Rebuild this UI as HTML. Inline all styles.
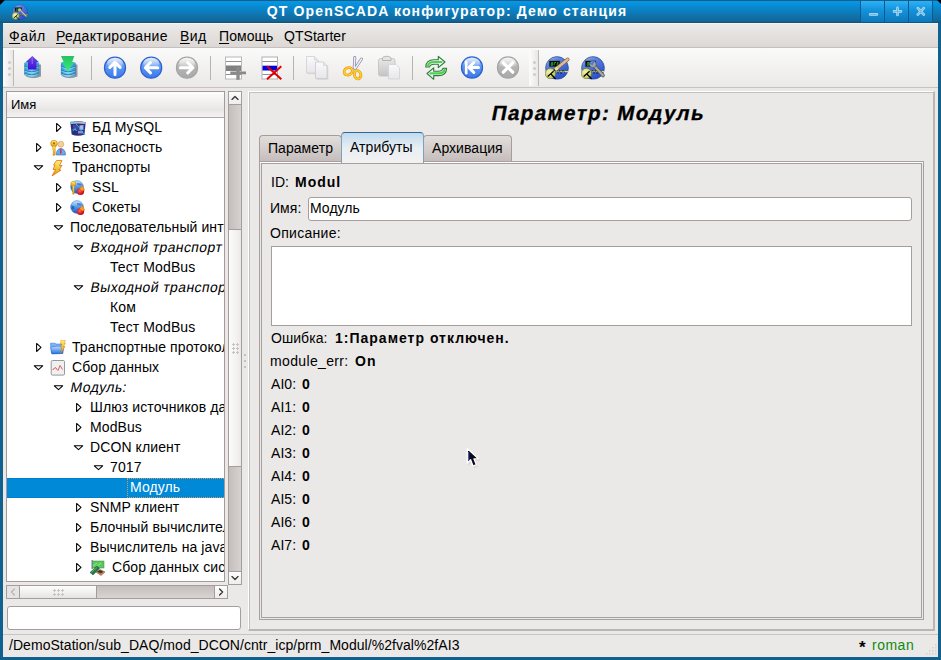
<!DOCTYPE html>
<html><head><meta charset="utf-8">
<style>
*{box-sizing:border-box}
body{margin:0;width:941px;height:660px;overflow:hidden;position:relative;background:#11618f;font-family:"Liberation Sans",sans-serif;font-size:14px;color:#000;letter-spacing:0.05px}
.a{position:absolute;white-space:nowrap}
svg{position:absolute;overflow:visible}
#tb{left:0;top:0;width:941px;height:23px;background:linear-gradient(#1b5c80 0,#1b5c80 1px,#0399ea 1px,#0a86cc 8px,#136696 21px,#0c5784 22px,#0c5784 23px)}
#title{left:0;top:3px;width:894px;text-align:center;color:#fff;font-weight:bold;font-size:14px;letter-spacing:1.15px;line-height:16px}
.wbtn{top:1px;height:21px;background:linear-gradient(#2cb2fa,#1594dc 40%,#0c78bc);border-left:1px solid #0c5a8a}
#client{left:3px;top:23px;width:935px;height:634px;background:#ebe9e7}
#menubar{left:3px;top:23px;width:935px;height:25px;background:linear-gradient(#f5f1ef 0,#f5f1ef 1px,#ebe9e7 1px,#dcd8d6 100%);border-bottom:1px solid #c6bfbd}
.menu{top:28px;line-height:16px}
.menu u{text-decoration:underline;text-decoration-thickness:1px;text-underline-offset:2px}
#toolbar{left:3px;top:48px;width:935px;height:40px;background:linear-gradient(#fafafa,#ebe9e7);border-bottom:1px solid #c9c2c0}
.sep{top:56px;width:1px;height:24px;background:#b8b2b0}
.handle{top:50px;width:11px;height:36px;border-right:1px solid #bdb6b4;background:linear-gradient(90deg,#fcfcfc,#e9e7e6)}
.dot{width:3px;height:3px;border-radius:1.5px;background:#d0cbc9}
#status{left:9px;top:637px;line-height:16px}
/* tree */
#tree{left:6px;top:91px;width:219px;height:491px;background:#fff;border:1px solid #a49a98;overflow:hidden}
#thead{left:0;top:0;width:217px;height:26px;background:linear-gradient(#fdfdfd,#e8e6e5 72%,#f3f1f1 96%);border-bottom:1px solid #b0a8a6}
.row{position:absolute;left:0;width:217px;height:20px;line-height:20px;letter-spacing:0.1px}
.row span{position:absolute;top:-1px}
.sel{background:linear-gradient(#0080d0 0,#0080d0 1px,#0089d7 1px,#0089d7 19px,#0080d0 19px);color:#fff}
.it{transform:skewX(-11deg);transform-origin:0 14px;letter-spacing:0.4px}
.bd{font-weight:bold;letter-spacing:1px}
.lbl{line-height:16px}

#rp{left:248px;top:91px;width:687px;height:540px;border-left:1px solid #fff;border-top:1px solid #fff;border-right:2px solid #bab6b4;border-bottom:2px solid #bab6b4}
#rpi{left:249px;top:92px;width:684px;height:537px;border-left:1px solid #c6bfbd;border-top:1px solid #c6bfbd}
#hdr{left:491px;top:101px;font-size:20.5px;font-weight:bold;letter-spacing:1.4px;line-height:23px;transform:skewX(-11deg);transform-origin:0 18px;-webkit-text-stroke:0.3px #000}
.tab{height:27px;border:1px solid #a59d9b;border-bottom:none;border-radius:4px 4px 0 0;background:linear-gradient(#e2dedc,#c4bcba);line-height:16px}
.tab span{position:absolute;top:4px}
#tabA{background:linear-gradient(#c2daee,#e8eef3 50%,#f3f1f1);border-color:#7da0bc;border-top-color:#2d6896}
#pane{left:259px;top:161px;width:665px;height:459px;border:1px solid #a8a09e}
#panei{left:261px;top:163px;width:661px;height:455px;border:1px solid #a8a09e}
.inp{background:#fff;border:1px solid #a69e9c}

.sb{background:linear-gradient(90deg,#c4bebc,#d6d2d0);border:1px solid #a59d9b}
.sbtn{background:linear-gradient(#fdfdfd,#efedec);border:1px solid #a59d9b}
.grip{width:2px;height:2px;background:#c8c2c0}
</style></head>
<body>
<!--TREEICONDEFS-->
<svg width="0" height="0" style="position:absolute">
<defs>
<linearGradient id="gBlueGlobe" x1="0" y1="0" x2="0" y2="1"><stop offset="0" stop-color="#d8ecff"/><stop offset="0.45" stop-color="#5aa0e8"/><stop offset="1" stop-color="#1a5cc0"/></linearGradient>
<radialGradient id="gRed" cx="0.4" cy="0.4" r="0.6"><stop offset="0" stop-color="#ff6060"/><stop offset="1" stop-color="#c00010"/></radialGradient>
<linearGradient id="gYel" x1="0" y1="0" x2="0" y2="1"><stop offset="0" stop-color="#fff27a"/><stop offset="1" stop-color="#e89a00"/></linearGradient>
<linearGradient id="gFold" x1="0" y1="0" x2="0" y2="1"><stop offset="0" stop-color="#bfdcff"/><stop offset="1" stop-color="#1f6fe0"/></linearGradient>
<linearGradient id="gDb" x1="0" y1="0" x2="1" y2="0"><stop offset="0" stop-color="#2b2f6e"/><stop offset="0.5" stop-color="#7c88d8"/><stop offset="1" stop-color="#2a2d66"/></linearGradient>
<symbol id="i-db" viewBox="0 0 16 16">
 <path d="M0.3 2.2 Q8 0.5 15.7 2.2 L14.5 14.5 Q8 17 1.7 14.5 Z" fill="#2c2e78"/>
 <path d="M0.5 2.2 Q8 0.8 15.5 2.2 L15.3 4 Q8 2.8 0.7 4 Z" fill="#b4bccc"/>
 <path d="M3 5 L8 5 L8 9 L3 9 Z" fill="#4a4cb0" opacity="0.8"/>
 <path d="M9.5 5.5 L13.5 5 L13.3 10 L9.5 10 Z" fill="#c8d0ff" opacity="0.85"/>
 <path d="M8 11 L13 11 L12.8 13.5 L8 13.5 Z" fill="#9aa8f0" opacity="0.8"/>
 <path d="M1.5 9.5 Q8 10.5 15 9.5" stroke="#6a70c8" stroke-width="0.6" fill="none"/>
 <path d="M0.8 1.5 Q6 2.5 8.5 6.5 Q11 11 15 15" stroke="#30c8f0" stroke-width="0.9" fill="none"/>
 <path d="M3 11 L5 8.5 L6.5 11" stroke="#30c8f0" stroke-width="0.9" fill="none"/>
</symbol>
<symbol id="i-sec" viewBox="0 0 16 16">
 <circle cx="4" cy="3.5" r="3.3" fill="url(#gYel)" stroke="#c07800" stroke-width="0.6"/>
 <circle cx="4" cy="3.2" r="1" fill="#a06000"/>
 <path d="M2.8 6 L5.2 6 L5.2 15 L3.5 15.5 L2.8 14 L3.6 13 L2.8 12 L3.6 11 L2.8 10 Z" fill="url(#gYel)" stroke="#c07800" stroke-width="0.5"/>
 <circle cx="10.8" cy="4.2" r="3" fill="#f4cf9a" stroke="#c89050" stroke-width="0.5"/>
 <path d="M6.5 15 Q6 9 10.8 8.5 Q15.5 9 15.5 15 Z" fill="#6ea8ef" stroke="#2a64b8" stroke-width="0.6"/>
 <path d="M10.3 8.6 L11.3 8.6 L11.5 13 L10.8 14 L10.1 13 Z" fill="#e02020"/>
</symbol>
<symbol id="i-bolt" viewBox="0 0 16 16">
 <path d="M6.5 0.5 L12 0.5 L9.5 5.5 L12 5.5 L9 10 L11 10 L2 16 L5.5 9.5 L3 9.5 L5 5 L3.5 5 Z" fill="url(#gYel)" stroke="#e06000" stroke-width="0.7" stroke-linejoin="round"/>
</symbol>
<symbol id="i-sock" viewBox="0 0 16 16">
 <circle cx="7" cy="7" r="6.3" fill="url(#gBlueGlobe)" stroke="#2a70d0" stroke-width="0.6"/>
 <path d="M1.5 6 Q4 5 4.5 8 Q3.5 10 1.5 9" fill="#1a50a0" opacity="0.7"/>
 <path d="M7 3 Q11 2.5 12.5 5 Q9 6 7 4.5 Z" fill="#1a60c0" opacity="0.6"/>
 <circle cx="10.5" cy="11.5" r="3.6" fill="url(#gRed)"/>
 <path d="M9.5 9 Q11 6 13 5.5 Q12 7.5 14 8 Q13.5 9.5 15 10 Q13 10.5 12.5 11 Z" fill="#f8a020" stroke="#e06000" stroke-width="0.4"/>
</symbol>
<symbol id="i-ssl" viewBox="0 0 16 16">
 <use href="#i-sock"/>
 <circle cx="3.3" cy="3.8" r="2.5" fill="url(#gYel)" stroke="#c07800" stroke-width="0.5"/>
 <path d="M2.4 5.5 L4.2 5.5 L4.2 14 L3 14.5 L2.4 13 L3 12 L2.4 11 Z" fill="url(#gYel)" stroke="#c07800" stroke-width="0.4"/>
</symbol>
<symbol id="i-fold" viewBox="0 0 16 16">
 <path d="M0.5 4 L0.5 3.2 L5 3.2 L6 4 L13 4 L13 13.5 L1.5 13.5 Z" fill="#7ab4f4" stroke="#2a70d0" stroke-width="0.5"/>
 <path d="M0.5 7 Q7 5.5 14 6.5 L12.5 13.5 L2 14 Z" fill="url(#gFold)" stroke="#1a5cc0" stroke-width="0.5"/>
 <path d="M11 0 L15.5 0 L14 3 L15.5 3 L13.5 6.5 L15 6.5 L10.5 13.5 L12 7.5 L10.8 7.5 L12 4 L10.5 4 Z" fill="url(#gYel)" stroke="#e07000" stroke-width="0.4"/>
</symbol>
<symbol id="i-chart" viewBox="0 0 16 16">
 <rect x="1.2" y="0.5" width="13.3" height="14.6" rx="1.2" fill="#f0f0f0" stroke="#8c8c8c" stroke-width="0.9"/>
 <path d="M2.5 9.5 L4 9 L5 7.5 L6 8 L7 9.5 L8 10.5 L9 8 L10 5.5 L11 7 L12.5 9.5" fill="none" stroke="#e05050" stroke-width="0.9"/>
</symbol>
<symbol id="i-net" viewBox="0 0 16 16">
 <rect x="1.5" y="0" width="1.2" height="9" fill="#7070c8"/>
 <rect x="2.5" y="1" width="11.5" height="7" fill="#5ac85a" stroke="#3a8a3a" stroke-width="0.5"/>
 <path d="M3 6 L7 3 M6 7 L11 3" stroke="#a0f0a0" stroke-width="0.8"/>
 <path d="M0 12.5 L7 6 L9.5 8.5 L3 15 Z" fill="#1a7a4a" stroke="#0a4a2a" stroke-width="0.4"/>
 <path d="M1.5 12.5 L7 7.5" stroke="#d8c040" stroke-width="0.6"/>
 <path d="M6 12 L10 9.5 L15 12 L11 15.5 Z" fill="#d88a4a" stroke="#7a3a2a" stroke-width="0.5"/>
 <path d="M7 11.8 L10 10 L13.5 11.8 L10.8 13.5 Z" fill="#3a3a3a"/>
</symbol>
</defs></svg>

<!--/TREEICONDEFS-->
<div class="a" id="tb"></div>
<div class="a" id="title">QT OpenSCADA конфигуратор: Демо станция</div>
<div class="a wbtn" style="left:860px;width:24px"></div>
<div class="a wbtn" style="left:884px;width:24px"></div>
<div class="a wbtn" style="left:908px;width:25px;border-right:1px solid #0c5a8a"></div>
<svg style="left:0;top:0" width="941" height="23">
<path d="M0 0 L5 0 L0 5 Z" fill="#000"/>
<path d="M937 0 L941 0 L941 4 Z" fill="#000"/>
<path d="M870.3 14.4 L876.8 14.4" stroke="#b8e0f6" stroke-width="2.8" stroke-linecap="round"/>
<path d="M870.3 14.4 L876.8 14.4" stroke="#6cb8e4" stroke-width="1.2" stroke-linecap="round"/>
<path d="M894 11.4 L901 11.4 M897.5 7.9 L897.5 14.9" stroke="#b8e0f6" stroke-width="2.6" stroke-linecap="round"/>
<path d="M894 11.4 L901 11.4 M897.5 7.9 L897.5 14.9" stroke="#6cb8e4" stroke-width="1.1" stroke-linecap="round"/>
<path d="M917.8 8.2 L923.8 14.6 M923.8 8.2 L917.8 14.6" stroke="#b8e0f6" stroke-width="2.6" stroke-linecap="round"/>
<path d="M917.8 8.2 L923.8 14.6 M923.8 8.2 L917.8 14.6" stroke="#6cb8e4" stroke-width="1.1" stroke-linecap="round"/>
</svg>
<div class="a" id="client"></div>
<div class="a" id="menubar"></div>
<div class="a menu" style="left:9px;letter-spacing:0.6px"><u>Ф</u>айл</div>
<div class="a menu" style="left:56px;letter-spacing:0.38px"><u>Р</u>едактирование</div>
<div class="a menu" style="left:180px;letter-spacing:0.4px"><u>В</u>ид</div>
<div class="a menu" style="left:219px"><u>П</u>омощь</div>
<div class="a menu" style="left:284px">QTStarter</div>
<div class="a" id="toolbar"></div>
<div class="a handle" style="left:3px"></div>
<div class="a dot" style="left:7.5px;top:60.5px"></div>
<div class="a dot" style="left:7.5px;top:66.5px"></div>
<div class="a dot" style="left:7.5px;top:72.5px"></div>
<div class="a sep" style="left:91px"></div>
<div class="a sep" style="left:210px"></div>
<div class="a sep" style="left:293px"></div>
<div class="a sep" style="left:412px"></div>
<div class="a handle" style="left:529px;width:10px"></div>
<div class="a dot" style="left:532.5px;top:60.5px"></div>
<div class="a dot" style="left:532.5px;top:66.5px"></div>
<div class="a dot" style="left:532.5px;top:72.5px"></div>
<!--TOOLICONS-->
<svg style="left:0;top:0" width="941" height="90">
<defs>
<linearGradient id="tgBlue" x1="0" y1="0" x2="0" y2="1"><stop offset="0" stop-color="#9cc0f8"/><stop offset="0.5" stop-color="#5a94f0"/><stop offset="1" stop-color="#3a78ec"/></linearGradient>
<linearGradient id="tgHi" x1="0" y1="0" x2="0" y2="1"><stop offset="0" stop-color="#fff" stop-opacity="0.75"/><stop offset="1" stop-color="#fff" stop-opacity="0.05"/></linearGradient>
<linearGradient id="tgGray" x1="0" y1="0" x2="0" y2="1"><stop offset="0" stop-color="#e0e0e0"/><stop offset="0.5" stop-color="#b4b4b4"/><stop offset="1" stop-color="#a8a8a8"/></linearGradient>
<linearGradient id="tgCyl" x1="0" y1="0" x2="1" y2="0"><stop offset="0" stop-color="#2a90c8"/><stop offset="0.5" stop-color="#78d0f4"/><stop offset="1" stop-color="#2a88c0"/></linearGradient>
<linearGradient id="tgPurp" x1="0" y1="0" x2="0" y2="1"><stop offset="0" stop-color="#6a4ae0"/><stop offset="1" stop-color="#4010d8"/></linearGradient>
<linearGradient id="tgGreen" x1="0" y1="0" x2="0" y2="1"><stop offset="0" stop-color="#28c060"/><stop offset="1" stop-color="#30f080"/></linearGradient>
<linearGradient id="tgApp" x1="0" y1="0" x2="0.6" y2="1"><stop offset="0" stop-color="#a0b8f0"/><stop offset="0.35" stop-color="#5a80e0"/><stop offset="1" stop-color="#2850c8"/></linearGradient>
<radialGradient id="tgGauge" cx="0.4" cy="0.35" r="0.7"><stop offset="0" stop-color="#f0f4b0"/><stop offset="1" stop-color="#b8c050"/></radialGradient>
<linearGradient id="tgPage" x1="0" y1="0" x2="0" y2="1"><stop offset="0" stop-color="#fafafa"/><stop offset="1" stop-color="#e6e6ec"/></linearGradient>
<linearGradient id="tgClip" x1="0" y1="0" x2="0" y2="1"><stop offset="0" stop-color="#e8e8e8"/><stop offset="1" stop-color="#c4c4c4"/></linearGradient>
<linearGradient id="tgOrange" x1="0" y1="0" x2="0" y2="1"><stop offset="0" stop-color="#ffd040"/><stop offset="1" stop-color="#f09000"/></linearGradient>
<symbol id="cyl" viewBox="0 0 18 17">
 <path d="M2 3 L2 15 Q9 18.5 17 15 L17 3 Z" fill="#203040" opacity="0.45"/>
 <path d="M0.3 1.5 L0.3 13.5 Q7.6 17.5 15.2 13.5 L15.2 1.5 Z" fill="url(#tgCyl)"/>
 <ellipse cx="7.75" cy="1.6" rx="7.45" ry="1.6" fill="#4ab0e0"/>
 <path d="M0.3 4.5 Q7.6 8 15.2 4.5 M0.3 8.5 Q7.6 12 15.2 8.5 M0.3 11.5 Q7.6 15 15.2 11.5" fill="none" stroke="#2a78b0" stroke-width="0.9"/>
 <path d="M1 5.6 Q7.6 9 14.5 5.6 M1 9.6 Q7.6 13 14.5 9.6 M1 12.6 Q7.6 16 14.5 12.6" fill="none" stroke="#b8ecff" stroke-width="0.7" opacity="0.7"/>
</symbol>
<symbol id="app" viewBox="0 0 24 24">
 <circle cx="12" cy="12.5" r="11.4" fill="url(#tgApp)" stroke="#2e4a90" stroke-width="0.7"/>
 <rect x="4.4" y="5.5" width="10.4" height="5.5" fill="#000" stroke="#303030" stroke-width="0.4"/>
 <path d="M6 9.8 L6.5 7 L7.8 7 L7.6 9.8 Z M9 9.8 L9.5 7 L11 7 M12 9.8 L12.5 7 L13.8 7.5" stroke="#28b828" stroke-width="0.9" fill="none"/>
 <path d="M8 16.2 L23 16.2" stroke="#e0e040" stroke-width="1.2"/>
 <path d="M10 17.5 L11.5 14.5 L13 18 L14.5 15 L16 18.5 L18 14.5 L20 17.5" stroke="#101830" stroke-width="0.6" fill="none"/>
 <circle cx="5.4" cy="18" r="5.2" fill="url(#tgGauge)" stroke="#5a6030" stroke-width="0.5"/>
 <path d="M2.7 21 L8.6 15.8 M5.4 18 L10.7 23.5" stroke="#000" stroke-width="1.2"/>
</symbol>
</defs>
<!-- db up -->
<use href="#cyl" x="24" y="61.5" width="18" height="17"/>
<path d="M32.3 56 L38.8 62 L36.5 62 L36.5 69.5 L28 69.5 L28 62 L25.8 62 Z" fill="url(#tgPurp)"/>
<path d="M32.3 57.5 L32.3 64" stroke="#9a80f0" stroke-width="1.4" opacity="0.6"/>
<!-- db down -->
<use href="#cyl" x="60.5" y="61.5" width="18" height="17"/>
<path d="M61 56 L74.3 56 L72.2 62 L73.8 62 L68 71.8 L62.2 62 L63.6 62 Z" fill="url(#tgGreen)"/>
<!-- up circle -->
<circle cx="115" cy="67.7" r="10.5" fill="url(#tgBlue)" stroke="#2b62d0" stroke-width="1.3"/>
<ellipse cx="115" cy="63" rx="8" ry="5.2" fill="url(#tgHi)"/>
<path d="M115 74.5 L115 62.5 M109.8 67.4 L115 62.2 L120.2 67.4" fill="none" stroke="#fff" stroke-width="3" stroke-linecap="round" stroke-linejoin="round"/>
<!-- back circle -->
<circle cx="151.2" cy="67.7" r="10.5" fill="url(#tgBlue)" stroke="#2b62d0" stroke-width="1.3"/>
<ellipse cx="151.2" cy="63" rx="8" ry="5.2" fill="url(#tgHi)"/>
<path d="M157.8 67.7 L145.5 67.7 M150.5 62.5 L145.3 67.7 L150.5 72.9" fill="none" stroke="#fff" stroke-width="3" stroke-linecap="round" stroke-linejoin="round"/>
<!-- forward gray -->
<circle cx="187" cy="67.7" r="10.5" fill="url(#tgGray)" stroke="#a4a4a4" stroke-width="1.3"/>
<ellipse cx="187" cy="63" rx="8" ry="5.2" fill="url(#tgHi)"/>
<path d="M180.4 67.7 L192.7 67.7 M187.7 62.5 L192.9 67.7 L187.7 72.9" fill="none" stroke="#fff" stroke-width="3" stroke-linecap="round" stroke-linejoin="round"/>
<!-- add row -->
<rect x="225.5" y="57" width="16" height="22" fill="#fff" stroke="#b8b8b8" stroke-width="1"/>
<path d="M226 61.5 L241 61.5 M226 74.5 L241 74.5" stroke="#909090" stroke-width="1"/>
<rect x="226" y="65.5" width="15" height="5.5" fill="#808080"/>
<rect x="230.3" y="71.5" width="15.7" height="2.8" fill="#8a8a8a"/>
<rect x="236.3" y="67" width="3.4" height="12.8" fill="#8a8a8a"/>
<!-- del row -->
<rect x="262" y="57" width="15.5" height="22" fill="#fff" stroke="#b0b0b0" stroke-width="1"/>
<path d="M262.5 61.5 L277 61.5 M262.5 74.5 L277 74.5" stroke="#909090" stroke-width="1"/>
<rect x="262.5" y="65.7" width="14.5" height="4.8" fill="#0000e0"/>
<path d="M267 66.2 L281.3 79.3 M281.3 66.2 L267 79.3" stroke="#e00000" stroke-width="2"/>
<!-- copy (disabled) -->
<path d="M307 57 L315 57 L318.5 60.5 L318.5 73.5 L307 73.5 Z" fill="#999" opacity="0.25" transform="translate(0.8 0.8)"/>
<path d="M306.5 56.5 L314.5 56.5 L318 60 L318 73 L306.5 73 Z" fill="url(#tgPage)" stroke="#cfcfd4" stroke-width="0.8"/>
<path d="M314.5 56.5 L314.5 60 L318 60" fill="#e4e4ea" stroke="#cfcfd4" stroke-width="0.6"/>
<path d="M316 62.5 L324 62.5 L327.5 66 L327.5 79 L316 79 Z" fill="#999" opacity="0.25" transform="translate(0.8 0.8)"/>
<path d="M315.5 62 L323.5 62 L327 65.5 L327 78.5 L315.5 78.5 Z" fill="url(#tgPage)" stroke="#c8c8ce" stroke-width="0.8"/>
<path d="M323.5 62 L323.5 65.5 L327 65.5" fill="#e4e4ea" stroke="#c8c8ce" stroke-width="0.6"/>
<!-- scissors -->
<path d="M354.8 57.5 L354.2 68 M361.5 59 L355.2 68.5" stroke="#8a8aa8" stroke-width="3" stroke-linecap="round"/>
<path d="M354.8 57.5 L354.2 68 M361.5 59 L355.2 68.5" stroke="#eeeef6" stroke-width="1.5" stroke-linecap="round"/>

<ellipse cx="348.2" cy="71.3" rx="4.3" ry="3.5" fill="none" stroke="#e8a000" stroke-width="2.8" transform="rotate(-30 348.2 71.3)"/>
<ellipse cx="357.6" cy="74.8" rx="3.2" ry="4.2" fill="none" stroke="#e8a000" stroke-width="2.8" transform="rotate(-15 357.6 74.8)"/>
<ellipse cx="348.2" cy="71.3" rx="4.3" ry="3.5" fill="none" stroke="#ffd040" stroke-width="1.4" transform="rotate(-30 348.2 71.3)"/>
<ellipse cx="357.6" cy="74.8" rx="3.2" ry="4.2" fill="none" stroke="#ffd040" stroke-width="1.4" transform="rotate(-15 357.6 74.8)"/>
<!-- paste disabled -->
<rect x="378.5" y="58.5" width="16.5" height="17.5" rx="2.2" fill="url(#tgClip)" stroke="#c0c0c0" stroke-width="0.8"/>
<path d="M382.5 60.5 L382.5 58.5 Q382.5 56.3 386.7 56.3 Q391 56.3 391 58.5 L391 60.5 Z" fill="#e4e4e4" stroke="#a8a8a8" stroke-width="0.8"/>
<path d="M388.5 64.5 L396 64.5 L399.5 68 L399.5 79 L388.5 79 Z" fill="url(#tgPage)" stroke="#d0d0d0" stroke-width="0.8"/>
<!-- refresh -->
<path d="M425.8 67 Q426 59.8 434 59.8 L438.3 59.8 L438.3 56.3 L445 62 L438.3 67.6 L438.3 64.3 L434 64.3 Q430 64.5 429.6 67 Z" fill="#eefaee" stroke="#2f7a3f" stroke-width="1.1" stroke-linejoin="round"/>
<path d="M428 66 Q428.5 62 434 62 L441.5 62" fill="none" stroke="#50d050" stroke-width="2.2" stroke-linecap="round"/>
<path d="M446.6 68.4 Q446.4 75.6 438.4 75.6 L433.7 75.6 L433.7 79.3 L427 73.5 L433.7 67.8 L433.7 71.2 L438.4 71.2 Q442.4 71 442.9 68.4 Z" fill="#eefaee" stroke="#2f7a3f" stroke-width="1.1" stroke-linejoin="round"/>
<path d="M444.6 69.4 Q444 73.4 438.4 73.4 L430.5 73.4" fill="none" stroke="#50d050" stroke-width="2.2" stroke-linecap="round"/>
<!-- home (back to start) -->
<circle cx="472" cy="67.5" r="10.5" fill="url(#tgBlue)" stroke="#2b62d0" stroke-width="1.3"/>
<ellipse cx="472" cy="62.8" rx="8" ry="5.2" fill="url(#tgHi)"/>
<path d="M466.2 61.8 L466.2 73.2" stroke="#fff" stroke-width="2.6" stroke-linecap="round"/>
<path d="M478.5 67.5 L469.5 67.5 M473.8 62.5 L468.8 67.5 L473.8 72.5" fill="none" stroke="#fff" stroke-width="3" stroke-linecap="round" stroke-linejoin="round"/>
<!-- stop gray -->
<circle cx="508" cy="67.5" r="10.5" fill="url(#tgGray)" stroke="#a4a4a4" stroke-width="1.3"/>
<ellipse cx="508" cy="62.8" rx="8" ry="5.2" fill="url(#tgHi)"/>
<path d="M503.3 62.8 L512.7 72.2 M512.7 62.8 L503.3 72.2" stroke="#fff" stroke-width="3.2" stroke-linecap="round"/>
<!-- app icons -->
<use href="#app" x="545" y="55.5" width="24" height="24"/>
<path d="M567.6 59.5 L556 69" stroke="#806040" stroke-width="3.8" stroke-linecap="round"/>
<path d="M567.6 59.5 L556 69" stroke="#dcbc94" stroke-width="2.6" stroke-linecap="round"/>
<path d="M557.5 67.8 L555.3 69.6" stroke="#e8e8a0" stroke-width="3"/>
<path d="M555 69.8 L553.6 70.8" stroke="#202020" stroke-width="1.2"/>
<use href="#app" x="581" y="55.5" width="24" height="24"/>
<path d="M593.5 65 L603 75.5" stroke="#505050" stroke-width="3.6" stroke-linecap="round"/>
<path d="M593.5 65 L603 75.5" stroke="#a8a8a8" stroke-width="2.2" stroke-linecap="round"/>
<circle cx="592.8" cy="64.2" r="3.3" fill="#a8a8a8" stroke="#505050" stroke-width="0.6"/>
<path d="M589.5 62.5 L592.2 64.2 L593.8 61" stroke="#5078d8" stroke-width="1.8" fill="none"/>
</svg>

<!--/TOOLICONS-->

<!-- tree -->
<div class="a" id="tree">
<div class="a" id="thead"></div>
<div class="a lbl" style="left:4px;top:5px;font-size:13px;letter-spacing:0">Имя</div>
<!--ROWS-->
<div class="row" style="top:26px"><svg style="left:0;top:0" width="1" height="1"><path d="M49.6 5.4 L54.0 9.45 L49.6 13.5Z" fill="none" stroke="#000" stroke-width="1.05" stroke-linejoin="round"/></svg><svg style="left:63px;top:2px" width="16" height="16"><use href="#i-db"/></svg><span style="left:85px">БД MySQL</span></div>
<div class="row" style="top:46px"><svg style="left:0;top:0" width="1" height="1"><path d="M29.6 5.4 L34.0 9.45 L29.6 13.5Z" fill="none" stroke="#000" stroke-width="1.05" stroke-linejoin="round"/></svg><svg style="left:43px;top:2px" width="16" height="16"><use href="#i-sec"/></svg><span style="left:65px">Безопасность</span></div>
<div class="row" style="top:66px"><svg style="left:0;top:0" width="1" height="1"><path d="M27.3 7.8 L35.7 7.8 L31.5 11.6Z" fill="none" stroke="#000" stroke-width="1.05" stroke-linejoin="round"/></svg><svg style="left:43px;top:2px" width="16" height="16"><use href="#i-bolt"/></svg><span style="left:65px">Транспорты</span></div>
<div class="row" style="top:86px"><svg style="left:0;top:0" width="1" height="1"><path d="M49.6 5.4 L54.0 9.45 L49.6 13.5Z" fill="none" stroke="#000" stroke-width="1.05" stroke-linejoin="round"/></svg><svg style="left:63px;top:2px" width="16" height="16"><use href="#i-ssl"/></svg><span style="left:85px">SSL</span></div>
<div class="row" style="top:106px"><svg style="left:0;top:0" width="1" height="1"><path d="M49.6 5.4 L54.0 9.45 L49.6 13.5Z" fill="none" stroke="#000" stroke-width="1.05" stroke-linejoin="round"/></svg><svg style="left:63px;top:2px" width="16" height="16"><use href="#i-sock"/></svg><span style="left:85px">Сокеты</span></div>
<div class="row" style="top:126px"><svg style="left:0;top:0" width="1" height="1"><path d="M47.3 7.8 L55.7 7.8 L51.5 11.6Z" fill="none" stroke="#000" stroke-width="1.05" stroke-linejoin="round"/></svg><span style="left:63px">Последовательный интерфейс</span></div>
<div class="row" style="top:146px"><svg style="left:0;top:0" width="1" height="1"><path d="M67.3 7.8 L75.7 7.8 L71.5 11.6Z" fill="none" stroke="#000" stroke-width="1.05" stroke-linejoin="round"/></svg><span class="it" style="left:83px">Входной транспорт</span></div>
<div class="row" style="top:166px"><span style="left:103px">Тест ModBus</span></div>
<div class="row" style="top:186px"><svg style="left:0;top:0" width="1" height="1"><path d="M67.3 7.8 L75.7 7.8 L71.5 11.6Z" fill="none" stroke="#000" stroke-width="1.05" stroke-linejoin="round"/></svg><span class="it" style="left:83px">Выходной транспорт</span></div>
<div class="row" style="top:206px"><span style="left:103px">Ком</span></div>
<div class="row" style="top:226px"><span style="left:103px">Тест ModBus</span></div>
<div class="row" style="top:246px"><svg style="left:0;top:0" width="1" height="1"><path d="M29.6 5.4 L34.0 9.45 L29.6 13.5Z" fill="none" stroke="#000" stroke-width="1.05" stroke-linejoin="round"/></svg><svg style="left:43px;top:2px" width="16" height="16"><use href="#i-fold"/></svg><span style="left:65px">Транспортные протоколы</span></div>
<div class="row" style="top:266px"><svg style="left:0;top:0" width="1" height="1"><path d="M27.3 7.8 L35.7 7.8 L31.5 11.6Z" fill="none" stroke="#000" stroke-width="1.05" stroke-linejoin="round"/></svg><svg style="left:43px;top:2px" width="16" height="16"><use href="#i-chart"/></svg><span style="left:65px">Сбор данных</span></div>
<div class="row" style="top:286px"><svg style="left:0;top:0" width="1" height="1"><path d="M47.3 7.8 L55.7 7.8 L51.5 11.6Z" fill="none" stroke="#000" stroke-width="1.05" stroke-linejoin="round"/></svg><span class="it" style="left:63px">Модуль:</span></div>
<div class="row" style="top:306px"><svg style="left:0;top:0" width="1" height="1"><path d="M69.6 5.4 L74.0 9.45 L69.6 13.5Z" fill="none" stroke="#000" stroke-width="1.05" stroke-linejoin="round"/></svg><span style="left:83px">Шлюз источников данных</span></div>
<div class="row" style="top:326px"><svg style="left:0;top:0" width="1" height="1"><path d="M69.6 5.4 L74.0 9.45 L69.6 13.5Z" fill="none" stroke="#000" stroke-width="1.05" stroke-linejoin="round"/></svg><span style="left:83px">ModBus</span></div>
<div class="row" style="top:346px"><svg style="left:0;top:0" width="1" height="1"><path d="M67.3 7.8 L75.7 7.8 L71.5 11.6Z" fill="none" stroke="#000" stroke-width="1.05" stroke-linejoin="round"/></svg><span style="left:83px">DCON клиент</span></div>
<div class="row" style="top:366px"><svg style="left:0;top:0" width="1" height="1"><path d="M87.3 7.8 L95.7 7.8 L91.5 11.6Z" fill="none" stroke="#000" stroke-width="1.05" stroke-linejoin="round"/></svg><span style="left:103px">7017</span></div>
<div class="row sel" style="top:386px"><span style="left:123px">Модуль</span></div>
<div class="row" style="top:406px"><svg style="left:0;top:0" width="1" height="1"><path d="M69.6 5.4 L74.0 9.45 L69.6 13.5Z" fill="none" stroke="#000" stroke-width="1.05" stroke-linejoin="round"/></svg><span style="left:83px">SNMP клиент</span></div>
<div class="row" style="top:426px"><svg style="left:0;top:0" width="1" height="1"><path d="M69.6 5.4 L74.0 9.45 L69.6 13.5Z" fill="none" stroke="#000" stroke-width="1.05" stroke-linejoin="round"/></svg><span style="left:83px">Блочный вычислитель</span></div>
<div class="row" style="top:446px"><svg style="left:0;top:0" width="1" height="1"><path d="M69.6 5.4 L74.0 9.45 L69.6 13.5Z" fill="none" stroke="#000" stroke-width="1.05" stroke-linejoin="round"/></svg><span style="left:83px">Вычислитель на java</span></div>
<div class="row" style="top:466px"><svg style="left:0;top:0" width="1" height="1"><path d="M69.6 5.4 L74.0 9.45 L69.6 13.5Z" fill="none" stroke="#000" stroke-width="1.05" stroke-linejoin="round"/></svg><svg style="left:83px;top:2px" width="16" height="16"><use href="#i-net"/></svg><span style="left:105px">Сбор данных системы</span></div>
<!--/ROWS-->
</div>


<!-- right panel -->
<div class="a" id="rp"></div>
<div class="a" id="rpi"></div>
<div class="a" id="hdr">Параметр: Модуль</div>
<div class="a tab" style="left:259px;top:135px;width:83px"><span style="left:8px">Параметр</span></div>
<div class="a tab" style="left:423px;top:135px;width:89px"><span style="left:8px">Архивация</span></div>
<div class="a" id="pane"></div>
<div class="a" id="panei"></div>
<div class="a" style="left:260px;top:162px;width:663px;height:1px;background:#fff"></div>
<div class="a tab" id="tabA" style="left:341px;top:132px;width:83px;height:31px"><span style="left:8px;top:6px">Атрибуты</span></div>
<div class="a lbl" style="left:271px;top:174px">ID:</div>
<div class="a lbl bd" style="left:295px;top:174px">Modul</div>
<div class="a lbl" style="left:270px;top:200px">Имя:</div>
<div class="a inp" style="left:308px;top:197px;width:604px;height:24px;border-radius:3px"></div>
<div class="a lbl" style="left:310px;top:200px">Модуль</div>
<div class="a lbl" style="left:270px;top:225px;letter-spacing:0.3px">Описание:</div>
<div class="a inp" style="left:271px;top:246px;width:641px;height:80px"></div>
<div class="a lbl" style="left:271px;top:330px">Ошибка:</div>
<div class="a lbl bd" style="left:335px;top:330px">1:Параметр отключен.</div>
<div class="a lbl" style="left:270px;top:353px;letter-spacing:0.35px">module_err:</div>
<div class="a lbl bd" style="left:355px;top:353px">On</div>
<div class="a lbl" style="left:271px;top:376px">AI0:</div><div class="a lbl bd" style="left:302px;top:376px">0</div>
<div class="a lbl" style="left:271px;top:399px">AI1:</div><div class="a lbl bd" style="left:302px;top:399px">0</div>
<div class="a lbl" style="left:271px;top:422px">AI2:</div><div class="a lbl bd" style="left:302px;top:422px">0</div>
<div class="a lbl" style="left:271px;top:445px">AI3:</div><div class="a lbl bd" style="left:302px;top:445px">0</div>
<div class="a lbl" style="left:271px;top:468px">AI4:</div><div class="a lbl bd" style="left:302px;top:468px">0</div>
<div class="a lbl" style="left:271px;top:491px">AI5:</div><div class="a lbl bd" style="left:302px;top:491px">0</div>
<div class="a lbl" style="left:271px;top:514px">AI6:</div><div class="a lbl bd" style="left:302px;top:514px">0</div>
<div class="a lbl" style="left:271px;top:537px">AI7:</div><div class="a lbl bd" style="left:302px;top:537px">0</div>



<!-- vscroll -->
<div class="a sb" style="left:228px;top:91px;width:14px;height:494px"></div>
<div class="a sbtn" style="left:228px;top:91px;width:14px;height:14px"></div>
<svg style="left:228px;top:91px" width="14" height="14"><path d="M4 8.4 L7 5.4 L10 8.4" fill="none" stroke="#383838" stroke-width="1.35" stroke-linecap="round" stroke-linejoin="round"/></svg>
<div class="a" style="left:228px;top:229px;width:14px;height:238px;border:1px solid #a59d9b;background:linear-gradient(90deg,#fbfbfb,#f3f2f1 60%,#ebe9e8)"></div>
<div class="a sbtn" style="left:228px;top:571px;width:14px;height:14px"></div>
<svg style="left:228px;top:571px" width="14" height="14"><path d="M4 5.6 L7 8.6 L10 5.6" fill="none" stroke="#383838" stroke-width="1.35" stroke-linecap="round" stroke-linejoin="round"/></svg>
<!-- hscroll -->
<div class="a sb" style="left:6px;top:585px;width:222px;height:14px;background:linear-gradient(#c4bebc,#d8d4d2)"></div>
<div class="a sbtn" style="left:6px;top:585px;width:14px;height:14px;background:#e6e3e2"></div>
<svg style="left:6px;top:585px" width="14" height="14"><path d="M8.4 4 L5.4 7 L8.4 10" fill="none" stroke="#b8b4b2" stroke-width="1.2" stroke-linecap="round" stroke-linejoin="round"/></svg>
<div class="a" style="left:19px;top:585px;width:78px;height:14px;border:1px solid #a59d9b;background:linear-gradient(#fdfdfd,#eeeceb 70%,#e6e4e3)"></div>
<div class="a sbtn" style="left:214px;top:585px;width:14px;height:14px"></div>
<svg style="left:214px;top:585px" width="14" height="14"><path d="M5.6 4 L8.6 7 L5.6 10" fill="none" stroke="#383838" stroke-width="1.35" stroke-linecap="round" stroke-linejoin="round"/></svg>
<!-- line edit -->
<div class="a inp" style="left:7px;top:606px;width:234px;height:24px;border-radius:3px"></div>
<!-- status -->
<div class="a" style="left:3px;top:634px;width:935px;height:1px;background:#c9c3c1"></div>
<div class="a" style="left:859px;top:640px;line-height:16px;font-size:17px;font-weight:bold">*</div>
<div class="a" style="left:872px;top:637px;line-height:16px;color:#108a10;letter-spacing:0.5px">roman</div>


<!-- title icon -->
<svg style="left:12px;top:4px" width="16" height="16" viewBox="0 0 24 24"><use href="#app"/>
<path d="M12 9 L21 18" stroke="#555" stroke-width="3.4" stroke-linecap="round"/><path d="M12 9 L21 18" stroke="#c0c0c0" stroke-width="2" stroke-linecap="round"/><circle cx="11.5" cy="9" r="2.8" fill="#c0c0c0" stroke="#555" stroke-width="0.6"/></svg>
<!-- focus rect on selected -->
<div class="a" style="left:127px;top:478px;width:97px;height:20px;border:1px dotted #c8a070;border-right:none"></div>
<!-- splitter dots -->
<div class="a dot" style="left:244px;top:354px;width:2px;height:2px;background:#b8b2b0"></div>
<div class="a dot" style="left:244px;top:360px;width:2px;height:2px;background:#b8b2b0"></div>
<div class="a dot" style="left:244px;top:366px;width:2px;height:2px;background:#b8b2b0"></div>
<!-- vscroll grip -->
<svg style="left:0;top:0" width="941" height="660">
<g stroke="#c8c2c0" stroke-width="1">
<path d="M232 344.5 L235 344.5 M233.5 343 L233.5 346 M236 344.5 L239 344.5 M237.5 343 L237.5 346"/>
<path d="M232 348.5 L235 348.5 M233.5 347 L233.5 350 M236 348.5 L239 348.5 M237.5 347 L237.5 350"/>
<path d="M232 352.5 L235 352.5 M233.5 351 L233.5 354 M236 352.5 L239 352.5 M237.5 351 L237.5 354"/>
<path d="M53 590.5 L56 590.5 M54.5 589 L54.5 592 M57 590.5 L60 590.5 M58.5 589 L58.5 592 M61 590.5 L64 590.5 M62.5 589 L62.5 592"/>
<path d="M53 594.5 L56 594.5 M54.5 593 L54.5 596 M57 594.5 L60 594.5 M58.5 593 L58.5 596 M61 594.5 L64 594.5 M62.5 593 L62.5 596"/>
</g>
<!-- resize grip -->
<g fill="#d4d0ce">
<rect x="935" y="644" width="1.5" height="1.5"/>
<rect x="932" y="647" width="1.5" height="1.5"/><rect x="935" y="647" width="1.5" height="1.5"/>
<rect x="929" y="650" width="1.5" height="1.5"/><rect x="932" y="650" width="1.5" height="1.5"/><rect x="935" y="650" width="1.5" height="1.5"/>
<rect x="926" y="653" width="1.5" height="1.5"/><rect x="929" y="653" width="1.5" height="1.5"/><rect x="932" y="653" width="1.5" height="1.5"/><rect x="935" y="653" width="1.5" height="1.5"/>
</g>
<!-- cursor -->
<path d="M468.5 450.5 L468.5 464 L472 460.8 L474.6 467 L476.8 466.1 L474.3 460.2 L479 460 Z" fill="#000" opacity="0.06" stroke="#000" stroke-width="2" stroke-linejoin="round"/>
<path d="M467.3 448.6 L467.3 463 L470.6 459.8 L473 466 L476.4 464.7 L474 458.9 L478.4 458.7 Z" fill="#0a0a1e" stroke="#fff" stroke-width="1.3" stroke-linejoin="round"/>
<path d="M468.6 452 L468.6 460.5" stroke="#5060b0" stroke-width="1.1"/>
</svg>

<div class="a" id="status">/DemoStation/sub_DAQ/mod_DCON/cntr_icp/prm_Modul/%2fval%2fAI3</div>
</body></html>
